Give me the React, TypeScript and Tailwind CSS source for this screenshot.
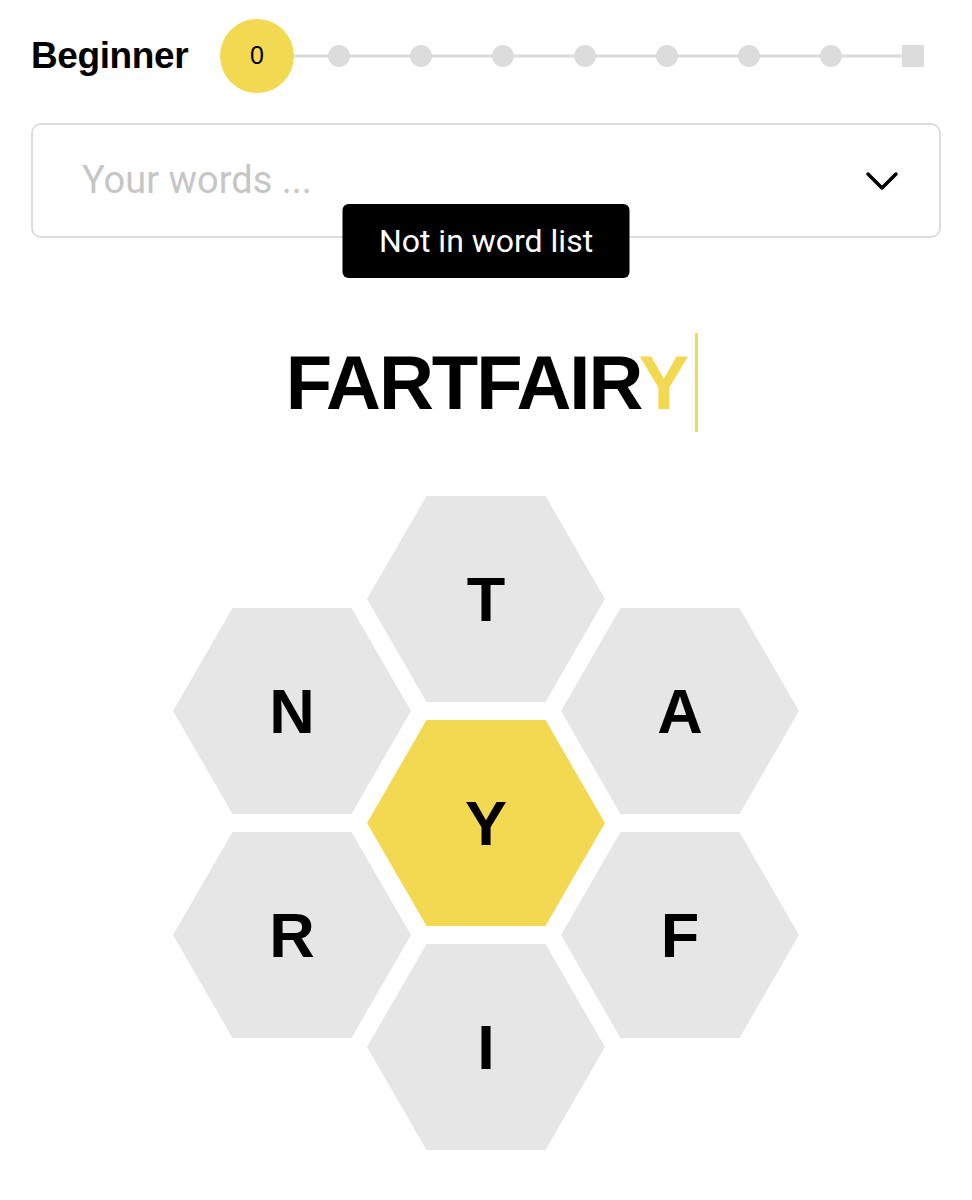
import React from 'react';

const HEX_CLIP =
  '[clip-path:polygon(25%_0,75%_0,100%_50%,75%_100%,25%_100%,0_50%)]';

function Hex({ letter, center = false }: { letter: string; center?: boolean }) {
  return (
    <div
      className={[
        'w-[238px] h-[206px] flex items-center justify-center',
        HEX_CLIP,
        center ? 'bg-[#f3d952]' : 'bg-[#e6e6e6]',
      ].join(' ')}
    >
      <span className="text-[63px] leading-none font-bold text-black font-['Liberation_Sans',Arial,sans-serif]">
        {letter}
      </span>
    </div>
  );
}

function Progress() {
  const steps = Array.from({ length: 9 }, (_, i) => i);
  return (
    <div className="relative grid grid-cols-[repeat(9,82px)] items-center h-[112px]">
      {/* track line under the markers */}
      <div className="absolute left-[41px] right-[41px] top-1/2 h-[3px] -translate-y-1/2 bg-[#dcdcdc]" />
      {steps.map((i) => (
        <div key={i} className="relative flex items-center justify-center">
          {i === 0 ? (
            <div className="w-[74px] h-[74px] rounded-full bg-[#f3d952] flex items-center justify-center">
              <span className="text-[25px] text-black font-['Liberation_Sans',Arial,sans-serif]">0</span>
            </div>
          ) : i === 8 ? (
            <div className="w-[22px] h-[22px] bg-[#dcdcdc]" />
          ) : (
            <div className="w-[22px] h-[22px] rounded-full bg-[#dcdcdc]" />
          )}
        </div>
      ))}
    </div>
  );
}

export default function App() {
  return (
    <div className="w-[972px] h-[1200px] bg-white overflow-hidden">
      {/* Rank row */}
      <div className="flex items-center pl-[31px]">
        <div className="w-[185px] text-[37px] font-bold text-black tracking-[-0.4px] font-['Liberation_Sans',Arial,sans-serif]">
          Beginner
        </div>
        <Progress />
      </div>

      {/* Word list dropdown + message */}
      <div className="relative mt-[11px] mx-[31px]">
        <div className="h-[115px] border-2 border-[#dddddd] rounded-[10px] flex items-center justify-between pl-[49px] pr-[40px]">
          <span className="text-[38px] text-[#c6c6c6] font-['Roboto',sans-serif]">Your words ...</span>
          <svg width="34" height="20" viewBox="0 0 34 20" fill="none">
            <path d="M3 3 L17 17 L31 3" stroke="#000" strokeWidth="3.5" strokeLinecap="round" strokeLinejoin="round" />
          </svg>
        </div>
        <div className="absolute top-[81px] left-1/2 -translate-x-1/2 w-[287px] h-[74px] bg-black rounded-[6px] flex items-center justify-center">
          <span className="text-[32px] text-white font-['Roboto',sans-serif]">Not in word list</span>
        </div>
      </div>

      {/* Current guess */}
      <div className="mt-[95px] flex items-center justify-center pl-[12px] h-[99px]">
        <span className="text-[76px] leading-none font-bold tracking-[-2px] text-black font-['Liberation_Sans',Arial,sans-serif]">
          FARTFAIR<span className="text-[#f3d952]">Y</span>
        </span>
        <span className="ml-[8px] w-[3px] h-[99px] bg-[#f3d952]" />
      </div>

      {/* Hive */}
      <div className="mt-[64px] flex justify-center">
        <div className="flex flex-col gap-[18px] pt-[112px]">
          <Hex letter="N" />
          <Hex letter="R" />
        </div>
        <div className="flex flex-col gap-[18px] -mx-[44px]">
          <Hex letter="T" />
          <Hex letter="Y" center />
          <Hex letter="I" />
        </div>
        <div className="flex flex-col gap-[18px] pt-[112px]">
          <Hex letter="A" />
          <Hex letter="F" />
        </div>
      </div>
    </div>
  );
}
